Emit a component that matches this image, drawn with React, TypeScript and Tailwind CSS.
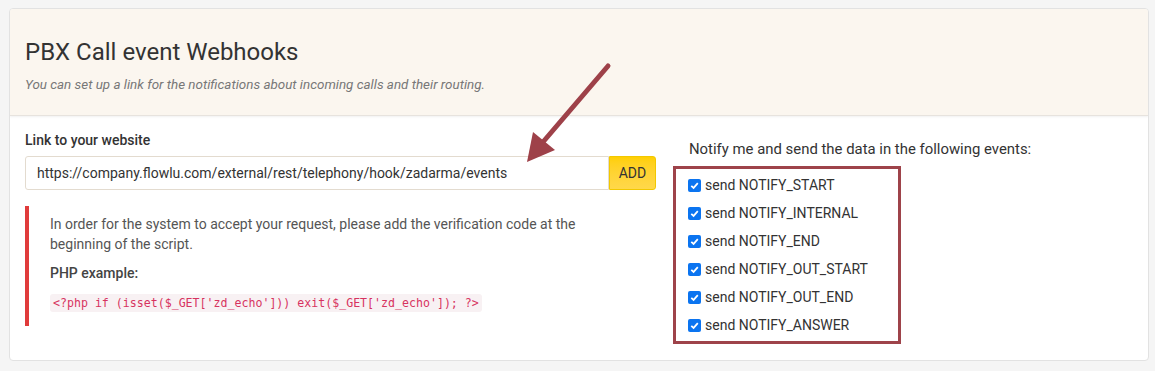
import React from "react";

const events = [
  "NOTIFY_START",
  "NOTIFY_INTERNAL",
  "NOTIFY_END",
  "NOTIFY_OUT_START",
  "NOTIFY_OUT_END",
  "NOTIFY_ANSWER",
];

export default function App() {
  return (
    <div
      className="relative w-[1155px] h-[371px] bg-[#f5f5f5] pt-[8px] pl-[9px]"
      style={{ fontFamily: "Roboto, 'Liberation Sans', sans-serif" }}
    >
      <div className="w-[1140px] h-[353px] bg-white border border-[#e2e2e2] rounded-[4px] overflow-hidden">
        <div className="h-[107px] bg-[#fbf6ef] border-b border-[#e7e3de] shadow-[0_1px_2px_rgba(0,0,0,0.06)] pl-[15px] pt-[28px]">
          <h1 className="text-[24px] leading-[30px] text-[#333]">PBX Call event Webhooks</h1>
          <p className="mt-[9px] text-[13.4px] leading-[18px] italic text-[#777]">
            You can set up a link for the notifications about incoming calls and their routing.
          </p>
        </div>
        <div className="flex pl-[15px] pt-[14px]">
          <div className="w-[631px]">
            <div className="text-[14px] leading-[20px] font-medium text-[#333]">Link to your website</div>
            <div className="mt-[6px] flex h-[34px]">
              <div className="flex-1 flex items-center border border-[#e3dbcf] rounded-l-[3px] pl-[11px] text-[14px] text-[#333]">
                https://company.flowlu.com/external/rest/telephony/hook/zadarma/events
              </div>
              <div className="w-[47px] flex items-center justify-center rounded-r-[3px] bg-gradient-to-b from-[#ffcf00] to-[#ffd84a] text-[14px] text-[#333] border border-[#f2c800]">
                ADD
              </div>
            </div>
            <div className="mt-[16px] border-l-[4px] border-[#e03b3b] pl-[21px] pt-[8px] h-[120px]">
              <p className="text-[14px] leading-[20px] text-[#555]">
                In order for the system to accept your request, please add the verification code at the
                <br />
                beginning of the script.
              </p>
              <p className="mt-[9px] text-[14px] leading-[20px] font-medium text-[#444]">PHP example:</p>
              <div className="mt-[11px] inline-block bg-[#f8f1f3] rounded-[3px] px-[3px] h-[18px] leading-[18px] text-[#d7335f]" style={{ fontFamily: "'DejaVu Sans Mono', 'Liberation Mono', monospace", fontSize: "11.6px" }}>
                {"<?php if (isset($_GET['zd_echo'])) exit($_GET['zd_echo']); ?>"}
              </div>
            </div>
          </div>
          <div className="ml-[17px] pt-[9px]">
            <div className="pl-[16px] text-[14.9px] leading-[20px] text-[#333]">
              Notify me and send the data in the following events:
            </div>
            <div className="mt-[7px] w-[228px] border-[3px] border-[#9e434a] py-[6px] pl-[12px] flex flex-col gap-[8px]">
              {events.map((e) => (
                <label key={e} className="flex items-center h-[20px] text-[14px] text-[#333]">
                  <span className="w-[13px] h-[13px] rounded-[2px] bg-[#0b74f0] flex items-center justify-center">
                    <svg width="11" height="11" viewBox="0 0 12 12">
                      <path d="M2.5 6.3 L5 8.6 L9.6 3.4" fill="none" stroke="white" strokeWidth="1.9" />
                    </svg>
                  </span>
                  <span className="ml-[4px]">send {e}</span>
                </label>
              ))}
            </div>
          </div>
        </div>
      </div>
      <svg className="absolute left-0 top-0 pointer-events-none" width="1155" height="371">
        <line x1="608" y1="66" x2="543" y2="142" stroke="#9e4149" strokeWidth="5" strokeLinecap="round" />
        <polygon points="527,162 533,132 555,150" fill="#9e4149" />
      </svg>
    </div>
  );
}
